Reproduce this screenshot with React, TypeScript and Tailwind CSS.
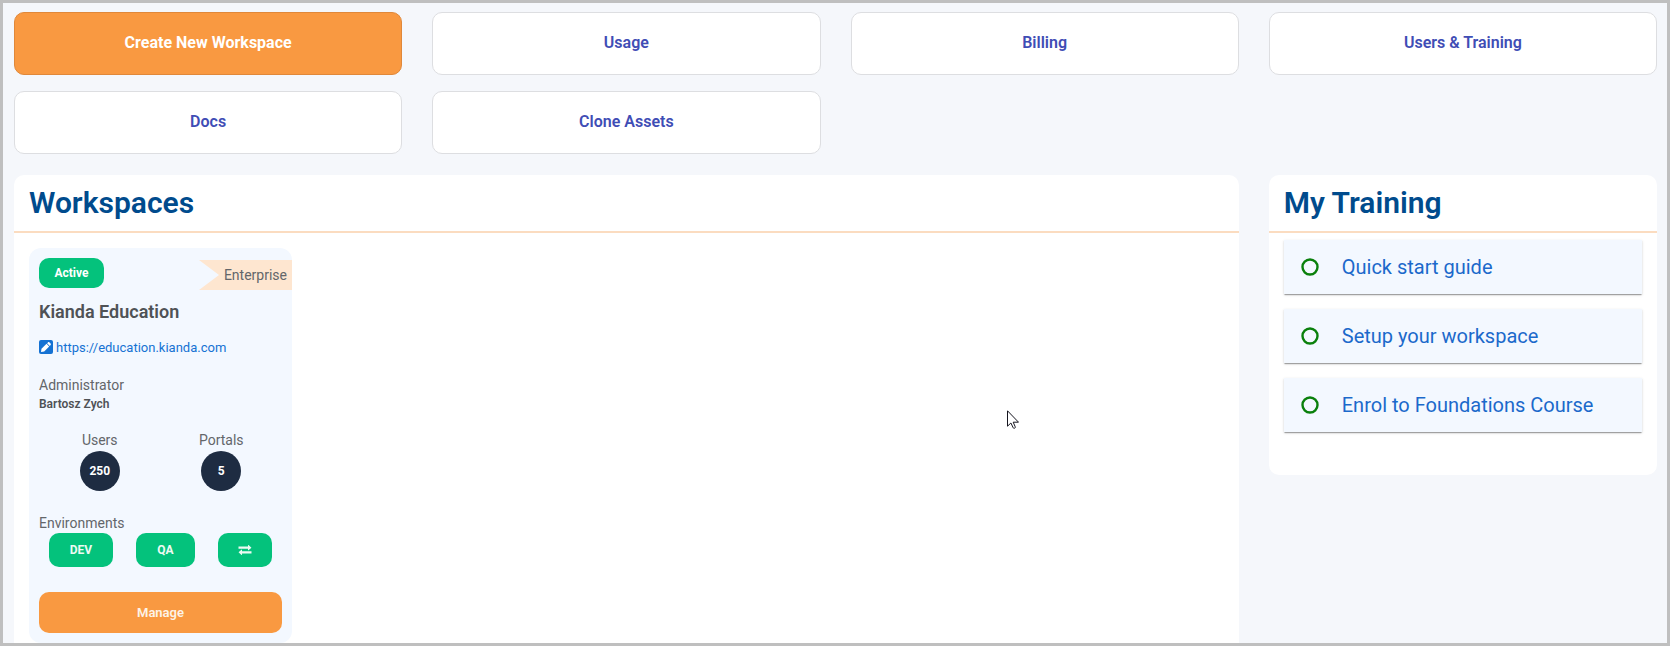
import type { ReactNode } from "react";

const links = ["Usage", "Billing", "Users & Training", "Docs", "Clone Assets"];
const training = ["Quick start guide", "Setup your workspace", "Enrol to Foundations Course"];

function PanelTitle({ children }: { children: ReactNode }) {
  return (
    <h2 className="border-b-2 border-[#fbdcc0] px-[15px] py-2.5 text-[30px] leading-9 font-semibold text-[#004b8d]">
      {children}
    </h2>
  );
}

function Counter({ label, value }: { label: string; value: number }) {
  return (
    <div className="flex flex-1 flex-col items-center">
      <span className="text-sm leading-[22px] text-[#63666a]">{label}</span>
      <span className="flex size-10 items-center justify-center rounded-full bg-[#1e2c42] text-xs font-bold text-white">
        {value}
      </span>
    </div>
  );
}

function SwapIcon() {
  return (
    <svg viewBox="0 0 14 10" className="w-3.5" fill="currentColor" aria-hidden="true">
      <path d="M.5 1.600H10V.3c0-.3.3-.4.5-.2l2.700 2.300c.2.2.2.4 0 .6l-2.700 2.300c-.2.2-.5.1-.5-.2V3.800H.5Z" />
      <path d="M13.500 6.200H4V4.900c0-.3-.3-.4-.5-.2L.8 7c-.2.2-.2.4 0 .6l2.700 2.300c.2.2.5.1.5-.2V8.400h9.500Z" />
    </svg>
  );
}

function EditIcon() {
  return (
    <svg viewBox="0 0 14 14" className="size-3.5" aria-hidden="true">
      <rect width="14" height="14" rx="2" fill="currentColor" />
      <path d="M2 12l.5-3.200 5-5 2.700 2.700-5 5Z" fill="#fff" />
      <path d="M8.100 3.200l.8-.8c.5-.5 1.100-.5 1.600 0l1.100 1.100c.5.5.5 1.100 0 1.600l-.8.8Z" fill="#fff" />
    </svg>
  );
}

function WorkspaceCard() {
  return (
    <article className="w-[263px] rounded-xl bg-[#f3f8ff] p-2.5 text-[#4f5256]">
      <div className="flex items-start justify-between">
        <span className="w-[65px] rounded-[10px] bg-[#04c27c] text-center text-xs leading-[30px] font-bold text-white">
          Active
        </span>
        <span className="mt-0.5 -mr-2.5 w-[93px] bg-[#fee6d0] pr-[5px] text-right text-sm leading-[30px] text-[#63666a] [clip-path:polygon(0_0,100%_0,100%_100%,0_100%,20px_50%)]">
          Enterprise
        </span>
      </div>
      <h3 className="mt-2.5 text-lg leading-6 font-semibold">Kianda Education</h3>
      <div className="mt-3 flex items-center gap-[3px] text-[#1572d3]">
        <button type="button" aria-label="Edit address" className="pb-0.5">
          <EditIcon />
        </button>
        <a href="https://education.kianda.com" className="text-[13px] leading-6">
          https://education.kianda.com
        </a>
      </div>
      <dl className="mt-[15px]">
        <dt className="text-sm leading-5 text-[#63666a]">Administrator</dt>
        <dd className="text-xs leading-[18px] font-semibold">Bartosz Zych</dd>
      </dl>
      <div className="mt-4 flex">
        <Counter label="Users" value={250} />
        <Counter label="Portals" value={5} />
      </div>
      <p className="mt-[22px] text-sm leading-5 text-[#63666a]">Environments</p>
      <div className="flex justify-between px-2.5 text-xs font-bold text-[#eefaf3]">
        <button type="button" className="h-[34px] w-16 rounded-[10px] bg-[#04c27c]">
          DEV
        </button>
        <button type="button" className="h-[34px] w-[59px] rounded-[10px] bg-[#04c27c]">
          QA
        </button>
        <button
          type="button"
          aria-label="Switch environments"
          className="flex h-[34px] w-[54px] items-center justify-center rounded-[10px] bg-[#04c27c]"
        >
          <SwapIcon />
        </button>
      </div>
      <button
        type="button"
        className="mt-[25px] h-[41px] w-full rounded-[10px] bg-[#f99941] text-[13px] font-semibold text-[#fdf3e8]"
      >
        Manage
      </button>
    </article>
  );
}

export default function App() {
  return (
    <div className="relative h-screen overflow-hidden border-[3px] border-[#bfbfbf] bg-[#f5f7fb] pt-[9px] pr-2.5 pl-[11px] font-[Roboto,sans-serif]">
      <nav className="grid grid-cols-4 gap-x-[30px] gap-y-4 text-base font-semibold">
        <button
          type="button"
          className="h-[63px] rounded-[10px] border border-[#e0883a] bg-[#f99941] pb-0.5 font-bold text-white"
        >
          Create New Workspace
        </button>
        {links.map((label) => (
          <a
            key={label}
            href="#"
            className="flex h-[63px] items-center justify-center rounded-[10px] border border-[#dddee1] bg-white pb-0.5 text-[#3f4db5]"
          >
            {label}
          </a>
        ))}
      </nav>
      <main className="mt-[21px] grid grid-cols-4 items-start gap-x-[30px]">
        <section className="col-span-3 rounded-[10px] bg-white pb-8">
          <PanelTitle>Workspaces</PanelTitle>
          <div className="px-[15px] pt-[15px]">
            <WorkspaceCard />
          </div>
        </section>
        <section className="rounded-[10px] bg-white pb-[43px]">
          <PanelTitle>My Training</PanelTitle>
          <ul className="flex flex-col gap-[15px] px-[15px] pt-[7px]">
            {training.map((item) => (
              <li key={item}>
                <a
                  href="#"
                  className="flex h-[54px] items-center gap-[23px] bg-[#f3f8ff] pl-[17px] text-xl text-[#1b69cb] shadow-[0_2px_1px_-1px_rgba(0,0,0,0.2),0_1px_1px_rgba(0,0,0,0.14),0_1px_3px_rgba(0,0,0,0.12)]"
                >
                  <svg viewBox="0 0 18 18" className="size-[18px]" aria-hidden="true">
                    <circle cx="9" cy="9" r="7.500" fill="none" stroke="#0a800c" strokeWidth="2.400" />
                  </svg>
                  {item}
                </a>
              </li>
            ))}
          </ul>
        </section>
      </main>
      <svg
        viewBox="0 0 12 19"
        className="pointer-events-none absolute top-[407px] left-[1004px] h-[19px] w-3"
        aria-hidden="true"
      >
        <path
          d="M.5.8v15.4l3.4-3.2 2.2 4.6c.3.7.9.9 1.500.6.7-.3.9-.8.6-1.500L6.200 12.200h5.300Z"
          fill="#fff"
          stroke="#15151f"
          strokeWidth="1"
        />
      </svg>
    </div>
  );
}
